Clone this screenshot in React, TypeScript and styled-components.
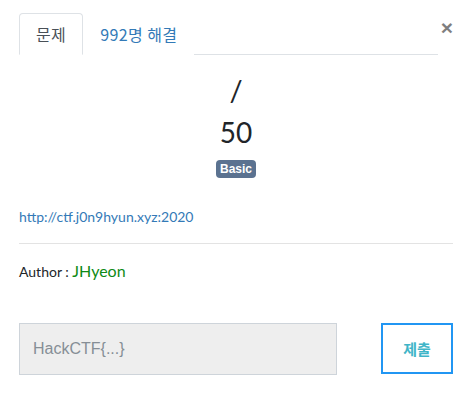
import React from 'react';
import styled, {createGlobalStyle} from "styled-components";

const GlobalStyle = createGlobalStyle`
    body {
        margin: 0;
        background: #fff;
        font-family: Lato, "Noto Sans CJK KR", sans-serif;
        color: #212529;
    }
`;

export default function App() {
    return (
        <>
            <GlobalStyle/>
            <StyledModal>
                <StyledHeader>
                    <StyledTabs>
                        <StyledTab active>문제</StyledTab>
                        <StyledTab>992명 해결</StyledTab>
                    </StyledTabs>
                    <StyledClose aria-label="Close">×</StyledClose>
                </StyledHeader>

                <StyledName>/</StyledName>
                <StyledValue>50</StyledValue>
                <StyledBadgeRow>
                    <StyledBadge>Basic</StyledBadge>
                </StyledBadgeRow>

                <StyledLink href="#">http://ctf.j0n9hyun.xyz:2020</StyledLink>
                <StyledDivider/>
                <StyledAuthor>Author : <span>JHyeon</span></StyledAuthor>

                <StyledSubmitRow>
                    <StyledInput placeholder="HackCTF{...}"/>
                    <StyledSubmit>제출</StyledSubmit>
                </StyledSubmitRow>
            </StyledModal>
        </>
    );
}

const StyledModal = styled.div`
    width: 472px;
    height: 405px;
    box-sizing: border-box;
    padding: 13px 19px 0;
`;

const StyledHeader = styled.div`
    display: flex;
    align-items: flex-start;
`;

const StyledTabs = styled.ul`
    display: flex;
    flex: 1;
    margin: 0;
    padding: 0;
    list-style: none;
    border-bottom: 1px solid #dee2e6;
`;

const StyledTab = styled.li<{ active?: boolean }>`
    padding: 8px 16px;
    margin-bottom: -1px;
    font-family: "Noto Sans CJK KR", sans-serif;
    font-size: 16px;
    line-height: 24px;
    letter-spacing: 0.4px;
    border: 1px solid ${p => p.active ? "#dee2e6" : "transparent"};
    border-bottom-color: ${p => p.active ? "#fff" : "transparent"};
    border-radius: 4px 4px 0 0;
    color: ${p => p.active ? "#495057" : "#337ab7"};
    background: #fff;
`;

const StyledClose = styled.button`
    width: 15px;
    margin-top: 4px;
    padding: 0;
    border: none;
    background: none;
    font-family: "Liberation Sans", sans-serif;
    font-size: 21px;
    font-weight: 700;
    line-height: 22px;
    color: #000;
    opacity: 0.5;
    text-align: right;
`;

const StyledName = styled.h3`
    margin: 17px 0 0;
    text-align: center;
    font-size: 29px;
    font-weight: 400;
    line-height: 36px;
`;

const StyledValue = styled.h4`
    margin: 6px 0 0;
    text-align: center;
    font-size: 28px;
    font-weight: 400;
    line-height: 36px;
`;

const StyledBadgeRow = styled.div`
    display: flex;
    justify-content: center;
    margin-top: 10px;
`;

const StyledBadge = styled.span`
    padding: 3px 4px;
    border-radius: 4px;
    background: #5b7290;
    color: #fff;
    font-family: "Liberation Sans", sans-serif;
    font-size: 12px;
    font-weight: 700;
    line-height: 12px;
`;

const StyledLink = styled.a`
    display: block;
    margin-top: 29px;
    font-size: 14px;
    line-height: 20px;
    color: #337ab7;
    text-decoration: none;
`;

const StyledDivider = styled.hr`
    margin: 16px 0 0;
    border: none;
    border-top: 1px solid #e3e3e3;
`;

const StyledAuthor = styled.p`
    margin: 17px 0 0;
    font-size: 14px;
    line-height: 20px;
    color: #212529;

    span {
        color: #0e8a16;
        font-size: 16px;
    }
`;

const StyledSubmitRow = styled.div`
    display: flex;
    justify-content: space-between;
    align-items: flex-start;
    margin-top: 41px;
`;

const StyledInput = styled.input`
    width: 318px;
    height: 52px;
    box-sizing: border-box;
    padding: 0 13px;
    border: 1px solid #ced4da;
    background: #eee;
    font-family: "Liberation Sans", Arial, sans-serif;
    font-size: 16px;
    color: #495057;

    &::placeholder {
        color: #868e96;
    }
`;

const StyledSubmit = styled.button`
    width: 72px;
    height: 51px;
    border: 2px solid #2196f3;
    background: #fff;
    color: #3fb5c8;
    font-family: "Noto Sans CJK KR", sans-serif;
    font-size: 15px;
    font-weight: 700;
`;
